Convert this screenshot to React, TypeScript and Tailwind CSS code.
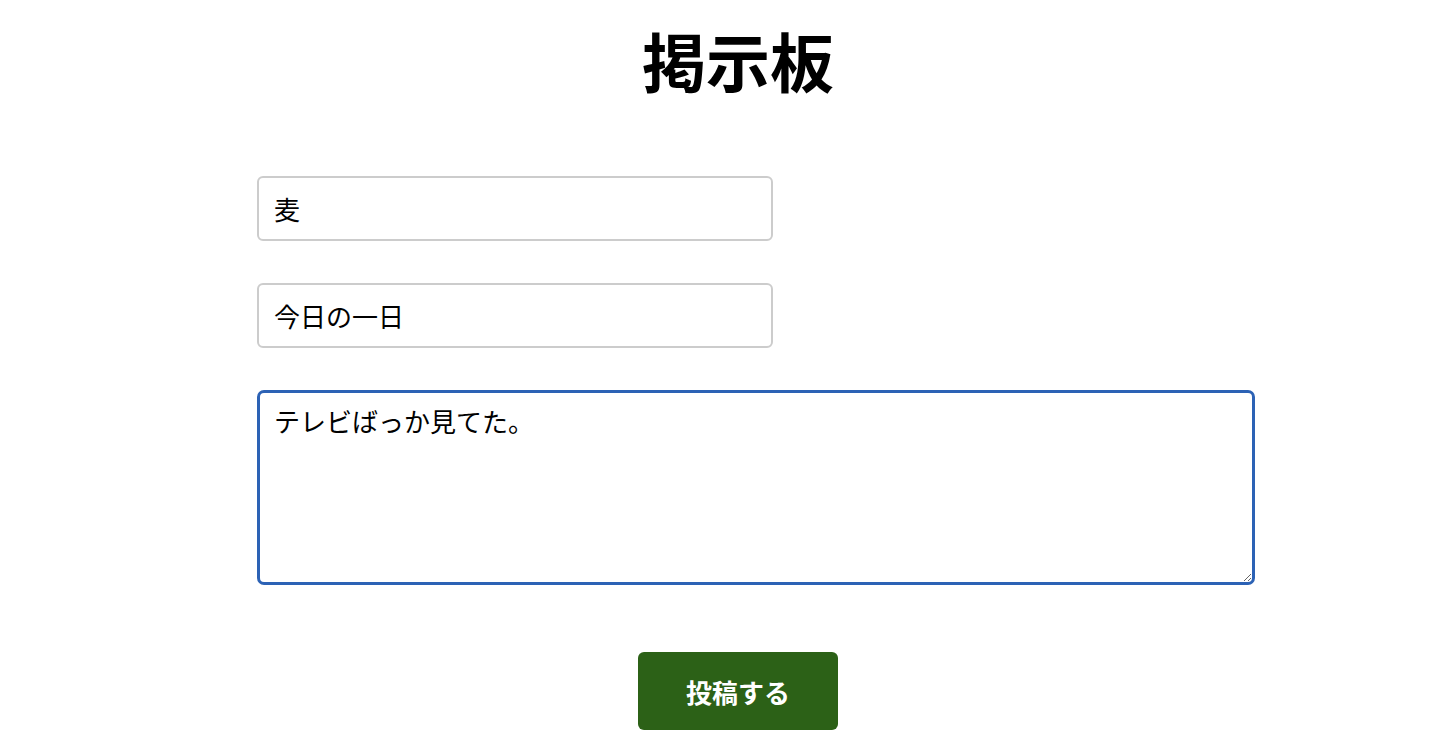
import React from "react";

export default function App() {
  return (
    <div className="min-h-[754px] w-full bg-white text-black font-['Noto_Sans_CJK_JP','Noto_Sans',sans-serif]">
      <div className="ml-[257px] w-[962px] flex flex-col">
        <h1 className="mt-[13px] text-center text-[64px] font-bold leading-[92px]">掲示板</h1>
        <div className="mt-[71px] flex flex-col gap-[42px]">
          <input
            defaultValue="麦"
            className="w-[516px] h-[65px] rounded-[6px] border-2 border-[#cccccc] px-[15px] text-[26px] outline-none font-['Noto_Sans_CJK_JP',sans-serif]"
          />
          <input
            defaultValue="今日の一日"
            className="w-[516px] h-[65px] rounded-[6px] border-2 border-[#cccccc] px-[15px] text-[26px] outline-none font-['Noto_Sans_CJK_JP',sans-serif]"
          />
          <textarea
            defaultValue="テレビばっか見てた。"
            className="w-[998px] h-[195px] rounded-[7px] border-[3px] border-[#2c62b5] px-[14px] py-[8px] text-[26px] outline-none font-['Noto_Sans_CJK_JP',sans-serif]"
          />
        </div>
        <div className="mt-[67px] flex justify-center">
          <button className="w-[200px] h-[78px] rounded-[6px] bg-[#2c6117] text-white text-[26px] font-bold font-['Noto_Sans_CJK_JP',sans-serif]">
            投稿する
          </button>
        </div>
      </div>
    </div>
  );
}
